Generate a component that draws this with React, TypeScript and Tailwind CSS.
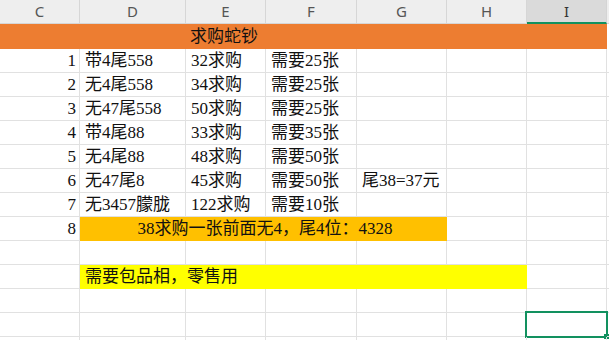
const colW = ['w-[80px]', 'w-[106px]', 'w-[80px]', 'w-[91px]', 'w-[90px]', 'w-[80px]', 'w-[80px]', 'w-[80px]']
const letters = ['C', 'D', 'E', 'F', 'G', 'H', 'I', 'J']

const rows = [
  ['1', '带4尾558', '32求购', '需要25张', ''],
  ['2', '无4尾558', '34求购', '需要25张', ''],
  ['3', '无47尾558', '50求购', '需要25张', ''],
  ['4', '带4尾88', '33求购', '需要35张', ''],
  ['5', '无4尾88', '48求购', '需要50张', ''],
  ['6', '无47尾8', '45求购', '需要50张', '尾38=37元'],
  ['7', '无3457朦胧', '122求购', '需要10张', ''],
]

const cell = 'h-full shrink-0 border-r border-b border-[#e1e1e1] flex items-center whitespace-nowrap'

function EmptyCells({ from, selected }: { from: number; selected?: number }) {
  return (
    <>
      {colW.slice(from).map((w, i) => (
        <div key={i} className={`${cell} ${w} relative`}>
          {selected === from + i && (
            <div className="absolute -left-[2px] -top-[2px] h-[27px] w-[83px] border-2 border-[#12915f]">
              <div className="absolute -bottom-[3px] -right-[3px] h-[5px] w-[5px] bg-[#12915f]" />
            </div>
          )}
        </div>
      ))}
    </>
  )
}

export default function App() {
  return (
    <div className="h-[340px] w-[609px] overflow-hidden bg-white font-['Liberation_Serif','Noto_Sans_CJK_SC',serif] text-[17px] text-[#111]">
      <div className="flex h-[24px] bg-[#eeeeee] font-['Noto_Sans',sans-serif] text-[15px] text-[#555]">
        {letters.map((l, i) => (
          <div
            key={l}
            className={`${colW[i]} flex h-full shrink-0 items-center justify-center border-r ${
              l === 'I' ? 'border-b-2 border-r-[#d4d4d4] border-b-[#12915f] bg-[#dadada] text-[#333]' : 'border-b border-[#d6d6d6]'
            }`}
          >
            {l !== 'J' && l}
          </div>
        ))}
      </div>

      <div className="flex h-[25px] w-[607px] items-center bg-[#ed7d31]">
        <span className="pl-[190px]">求购蛇钞</span>
      </div>

      {rows.map((r) => (
        <div key={r[0]} className="flex h-[24px]">
          <div className={`${cell} ${colW[0]} justify-end pr-[3px]`}>{r[0]}</div>
          <div className={`${cell} ${colW[1]} pl-[5px]`}>{r[1]}</div>
          <div className={`${cell} ${colW[2]} pl-[5px]`}>{r[2]}</div>
          <div className={`${cell} ${colW[3]} pl-[5px]`}>{r[3]}</div>
          <div className={`${cell} ${colW[4]} pl-[5px]`}>{r[4]}</div>
          <EmptyCells from={5} />
        </div>
      ))}

      <div className="flex h-[24px]">
        <div className={`${cell} ${colW[0]} justify-end pr-[3px]`}>8</div>
        <div className="flex h-full w-[367px] shrink-0 items-center justify-center border-b border-r border-[#ffc000] bg-[#ffc000] pl-[4px]">
          38求购一张前面无4，尾4位：4328
        </div>
        <EmptyCells from={5} />
      </div>

      <div className="flex h-[24px]">
        <EmptyCells from={0} />
      </div>

      <div className="flex h-[24px]">
        <div className={`${cell} ${colW[0]}`} />
        <div className="flex h-full w-[447px] shrink-0 items-center border-b border-r border-[#ffff00] bg-[#ffff00] pl-[5px]">
          需要包品相，零售用
        </div>
        <EmptyCells from={6} />
      </div>

      <div className="flex h-[24px]">
        <EmptyCells from={0} />
      </div>
      <div className="flex h-[24px]">
        <EmptyCells from={0} selected={6} />
      </div>
      <div className="flex h-[24px]">
        <EmptyCells from={0} />
      </div>
    </div>
  )
}
